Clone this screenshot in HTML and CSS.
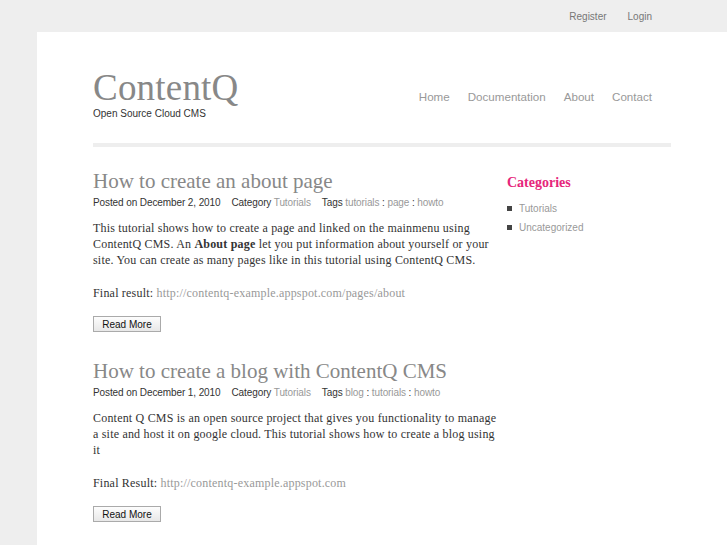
FILE: index.html
```html
<!DOCTYPE html>
<html>
<head>
<meta charset="utf-8">
<title>ContentQ</title>
<link rel="stylesheet" href="styles.css">
</head>
<body>
<div class="topbar">
  <a href="#">Register</a>
  <a href="#">Login</a>
</div>
<div class="wrap">
  <header class="header">
    <div class="brand">
      <div class="logo">ContentQ</div>
      <div class="tagline">Open Source Cloud CMS</div>
    </div>
    <nav class="nav">
      <a href="#">Home</a>
      <a href="#">Documentation</a>
      <a href="#">About</a>
      <a href="#">Contact</a>
    </nav>
  </header>
  <div class="sep"></div>
  <div class="columns">
    <main class="main">
      <article class="post">
        <h2 class="title">How to create an about page</h2>
        <div class="meta">
          <span>Posted on December 2, 2010</span>
          <span>Category <a href="#">Tutorials</a></span>
          <span>Tags <a href="#">tutorials</a> : <a href="#">page</a> : <a href="#">howto</a></span>
        </div>
        <p class="body">This tutorial shows how to create a page and linked on the mainmenu using ContentQ CMS. An <b>About page</b> let you put information about yourself or your site. You can create as many pages like in this tutorial using ContentQ CMS.<br><br>Final result: <a href="#">http://contentq-example.appspot.com/pages/about</a></p>
        <button class="more">Read More</button>
      </article>
      <article class="post">
        <h2 class="title">How to create a blog with ContentQ CMS</h2>
        <div class="meta">
          <span>Posted on December 1, 2010</span>
          <span>Category <a href="#">Tutorials</a></span>
          <span>Tags <a href="#">blog</a> : <a href="#">tutorials</a> : <a href="#">howto</a></span>
        </div>
        <p class="body">Content Q CMS is an open source project that gives you functionality to manage a site and host it on google cloud. This tutorial shows how to create a blog using it<br><br>Final Result: <a href="#">http://contentq-example.appspot.com</a></p>
        <button class="more">Read More</button>
      </article>
    </main>
    <aside class="side">
      <h3 class="side-title">Categories</h3>
      <ul class="cats">
        <li><a href="#">Tutorials</a></li>
        <li><a href="#">Uncategorized</a></li>
      </ul>
    </aside>
  </div>
</div>
</body>
</html>
```
FILE: styles.css
```css
html, body { margin: 0; padding: 0; }
body {
  background: #eeeeee;
  font-family: "Liberation Sans", Arial, sans-serif;
  color: #333;
  height: 545px;
  overflow: hidden;
}
a { text-decoration: none; }

.topbar {
  height: 32px;
  display: flex;
  justify-content: flex-end;
  align-items: center;
  gap: 21px;
  padding-right: 75px;
  font-size: 10px;
}
.topbar a { color: #777; }

.wrap {
  background: #fff;
  margin-left: 37px;
  padding: 0 56px;
  min-height: 600px;
}

.header {
  display: flex;
  justify-content: space-between;
  align-items: flex-start;
  padding-top: 38px;
  height: 73px;
}
.logo {
  font-family: "Liberation Serif", "Times New Roman", serif;
  font-size: 37px;
  line-height: 36px;
  color: #888;
  letter-spacing: 0.2px;
}
.tagline {
  font-size: 10px;
  color: #333;
  margin-top: 2px;
}
.nav {
  display: flex;
  gap: 18px;
  padding-top: 20px;
  margin-right: 19px;
  font-size: 11.6px;
}
.nav a { color: #999; }

.sep {
  height: 4px;
  background: #eeeeee;
}

.columns {
  display: flex;
  align-items: flex-start;
  padding-top: 22px;
}
.main { width: 411px; flex: none; }
.side { margin-left: 3px; flex: 1; }

.post { margin-bottom: 27px; }
.title {
  margin: 0;
  font-family: "Liberation Serif", "Times New Roman", serif;
  font-weight: normal;
  font-size: 21px;
  line-height: 25px;
  color: #888;
}
.meta {
  font-size: 10px;
  color: #333;
  margin-top: 3px;
  display: flex;
  gap: 11px;
  letter-spacing: -0.1px;
}
.meta a { color: #999; }
.body {
  font-family: "Liberation Serif", "Times New Roman", serif;
  font-size: 12px;
  letter-spacing: 0.2px;
  line-height: 16.2px;
  color: #333;
  margin: 12px 0 15px;
}
.body a { color: #999; }
.more {
  font-family: "Liberation Sans", Arial, sans-serif;
  font-size: 10px;
  color: #111;
  width: 68px;
  height: 16px;
  padding: 0;
  border: 1px solid #aaa;
  background: linear-gradient(#fdfdfd, #e8e8e8);
  border-radius: 0;
  display: block;
}

.side-title {
  margin: 0;
  font-family: "Liberation Serif", "Times New Roman", serif;
  font-size: 14px;
  color: #e6267a;
  line-height: 18px;
  padding-top: 5px;
}
.cats {
  list-style: none;
  margin: 7px 0 0;
  padding: 0;
  font-size: 10px;
}
.cats li {
  display: flex;
  align-items: center;
  height: 19px;
}
.cats li::before {
  content: "";
  width: 5px;
  height: 5px;
  background: #444;
  margin-right: 7px;
}
.cats a { color: #999; }
```
